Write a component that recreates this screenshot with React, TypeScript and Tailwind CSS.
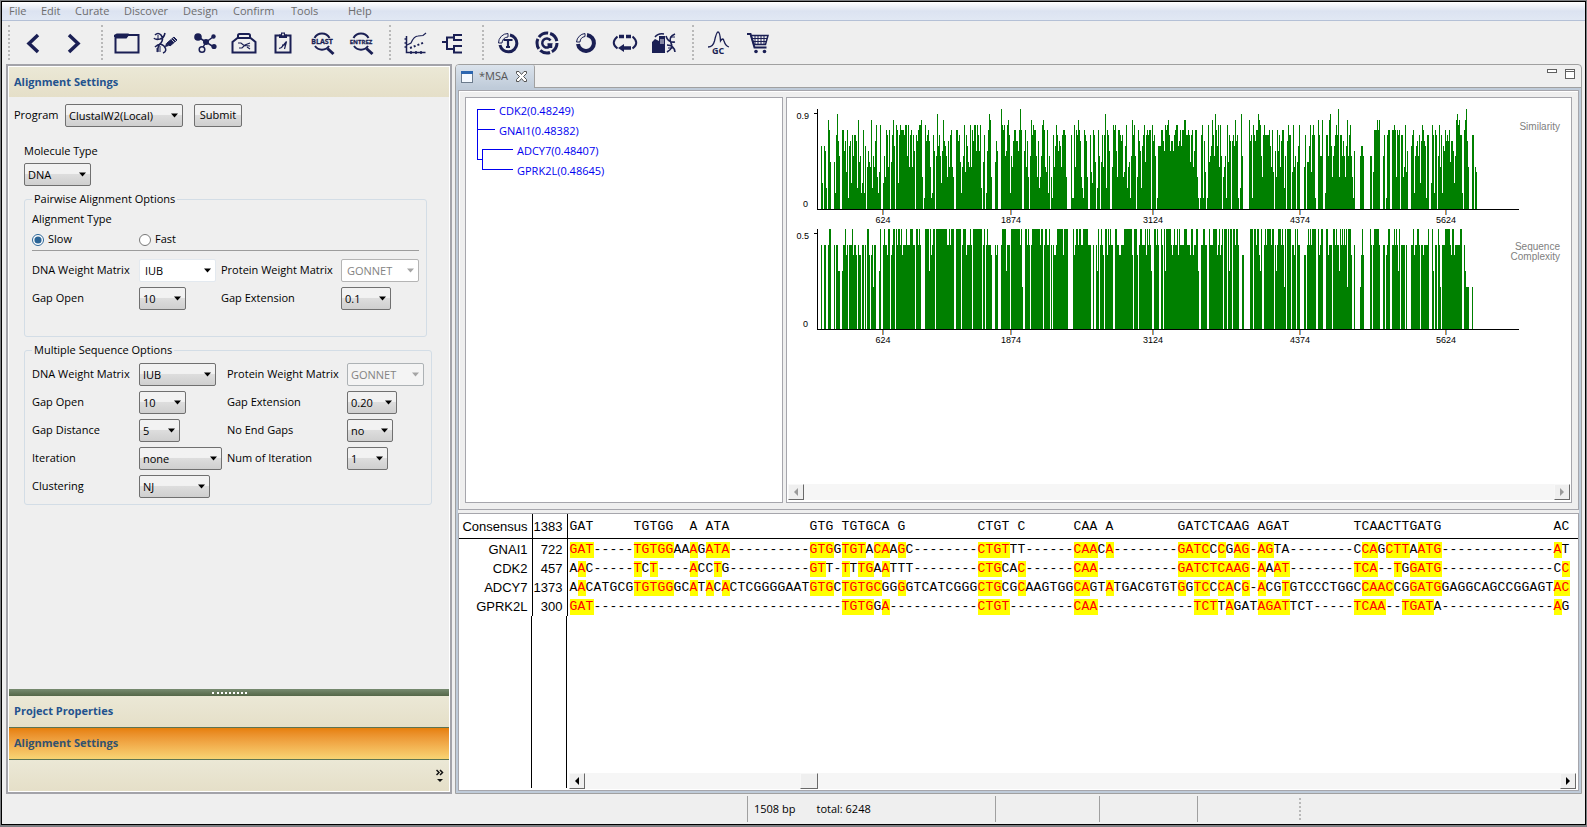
import React from 'react';

interface ComboProps {
  id: string;
  value: string;
  className: string;
  disabled?: boolean;
  flat?: boolean;
}

interface FieldProps extends ComboProps {
  label: string;
}

const MENUS = [
  { label: 'File', width: 'w-8' },
  { label: 'Edit', width: 'w-[34px]' },
  { label: 'Curate', width: 'w-[49px]' },
  { label: 'Discover', width: 'w-[59px]' },
  { label: 'Design', width: 'w-[50px]' },
  { label: 'Confirm', width: 'w-[58px]' },
  { label: 'Tools', width: 'w-[57px]' },
  { label: 'Help', width: 'w-10' },
];

const PAIRWISE_FIELDS: FieldProps[] = [
  { id: 'pw-dna', label: 'DNA Weight Matrix', value: 'IUB', className: 'w-[77px]', flat: true },
  { id: 'pw-protein', label: 'Protein Weight Matrix', value: 'GONNET', className: 'w-[78px]', flat: true, disabled: true },
  { id: 'pw-open', label: 'Gap Open', value: '10', className: 'w-[47px]' },
  { id: 'pw-ext', label: 'Gap Extension', value: '0.1', className: 'w-[50px]' },
];

const MULTIPLE_FIELDS: FieldProps[] = [
  { id: 'ms-dna', label: 'DNA Weight Matrix', value: 'IUB', className: 'w-[77px]' },
  { id: 'ms-protein', label: 'Protein Weight Matrix', value: 'GONNET', className: 'w-[77px]', disabled: true },
  { id: 'ms-open', label: 'Gap Open', value: '10', className: 'w-[47px]' },
  { id: 'ms-ext', label: 'Gap Extension', value: '0.20', className: 'w-[50px]' },
  { id: 'ms-dist', label: 'Gap Distance', value: '5', className: 'w-[41px]' },
  { id: 'ms-end', label: 'No End Gaps', value: 'no', className: 'w-[46px]' },
  { id: 'ms-iter', label: 'Iteration', value: 'none', className: 'w-[83px]' },
  { id: 'ms-num', label: 'Num of Iteration', value: '1', className: 'w-[41px]' },
  { id: 'ms-clust', label: 'Clustering', value: 'NJ', className: 'w-[71px]' },
];

const gap = (n: number) => '-'.repeat(n);
const blank = (n: number) => ' '.repeat(n);

const CONSENSUS =
  'GAT' + blank(5) + 'TGTGG  A ATA' + blank(10) + 'GTG TGTGCA G' + blank(9) + 'CTGT C' + blank(6) +
  'CAA A' + blank(8) + 'GATCTCAAG AGAT' + blank(8) + 'TCAACTTGATG' + blank(14) + 'AC';

const SEQUENCES = [
  {
    name: 'GNAI1',
    start: 722,
    bases:
      'GAT' + gap(5) + 'TGTGGAAAGATA' + gap(10) + 'GTGGTGTACAAGC' + gap(8) + 'CTGTTT' + gap(6) +
      'CAACA' + gap(8) + 'GATCCCGAG-AGTA' + gap(8) + 'CCAGCTTAATG' + gap(14) + 'AT',
  },
  {
    name: 'CDK2',
    start: 457,
    bases:
      'AAC' + gap(5) + 'TCT' + gap(4) + 'ACCTG' + gap(10) + 'GTT-TTTGAATTT' + gap(8) + 'CTGCAC' + gap(6) +
      'CAA' + gap(10) + 'GATCTCAAG-AAAT' + gap(8) + 'TCA--TGGATG' + gap(14) + 'CC',
  },
  {
    name: 'ADCY7',
    start: 1373,
    bases:
      'AACATGCGTGTGGGCATACACTCGGGGAATGTGCTGTGCGGGGTCATCGGGCTGCGCAAGTGGCAGTATGACGTGT' +
      'GGTCCCACG-ACGTGTCCCTGGCCAACCGGATGGAGGCAGCCGGAGTAC',
  },
  {
    name: 'GPRK2L',
    start: 300,
    bases:
      'GAT' + gap(31) + 'TGTGGA' + gap(11) + 'CTGT' + gap(8) + 'CAA' + gap(12) +
      'TCTTAGATAGATTCT' + gap(5) + 'TCAA--TGATA' + gap(14) + 'AG',
  },
];

// One letter per pixel column, a = 1 ... s = 19, '.' = no bar.
const SIMILARITY =
  '...le.lkd.qoi...icnrmj..ookmgoblmenjnnmdqijceocl.hkihqdjhmpfcgp..ejfonho.inql.po' +
  'enpooonppjphnohnk.nmoppqf.bpmnomhbcnk.jrlnjekqmljfmhnohf..oomnichjpgnlihphomppkp' +
  'nkpd.in.ckorqf...imk...spopjkpqncjhmoommkoso..kohmf.jqnpoojfmdfjpqohgocj.fbnhlpn' +
  'kmlhnoonf....nbbphonqomfdbonmf..ngeoni.doj.inhnrdonk..hpopkfoonmnfglpdhibjqnpj.f' +
  'omkdlnpinonoo.pmnj.bllloomkpopqnkmmknopplmolooqqnnoninohkoofb.bnpbmg.bpijlqnjrol' +
  'phpj.fhjbpinm.mnlqmnb.drj......qmnbpnmoorqpjfnpnnnnolhog.kfoknhmoodj.mpnn.gphj.i' +
  'lp....hn.iilpgnpnb..qnjjq..cnnjqrlfjlnpnsfnnjmjflqjnpjfbk.....jllj......jj.goooq' +
  'oq...jn.bnoo..oopofono.nnfhpgk...lnocjlmjnempomlbnn..epncon.jphnclkomnmoimmkejqr' +
  'pqnnc.oqsmh...nn.hg';

const COMPLEXITY =
  '...p..pp..pss...p.ppkk..kppsnp.pppsnppn.pnn.pp.p.ssn.nphpp...ks..psppnss.npss.sp' +
  'sspsnpppspppssspp.sspsp....ssssksnpss.sssssssssssppspsss..sssss.psssnpppsp.sssss' +
  'ssss.ps.pspppn...pnp...psssskppp.ssssssssspsh..sspsp.psssssssspss.psspps.p.pnnps' +
  'sssssnssss.....snpsspssppsssssppp..p..pks.pspn.ssnspspp..ssppnnpppssssssssn.sssn' +
  '.psspppsnspspk..sspsp..sp.skssssspnpsppsnsppppssspppnssnppssk..ppsspp..spppssssn' +
  'psnps.sss.skss.sspssp...nn......sss.sspssnks..pspsssspss.pkpssspsphs.ssss.ppns.s' +
  'pp....nn.pspspssss..snpss...ssnppp.sspsppkspspspshsssn..p.....hnsn......sp.pssss' +
  'sp...pp.npss..ppspspks.pppp.p....ppsnppssp.ppnpppps...sk.pp.sph.pppssssspnssnppp' +
  'ppss..pkhhh...h';

const AXIS_TICKS = [
  { x: 95, label: '624' },
  { x: 223, label: '1874' },
  { x: 365, label: '3124' },
  { x: 512, label: '4374' },
  { x: 658, label: '5624' },
];

const barPath = (levels: string, left: number, base: number) =>
  levels
    .split('')
    .map((ch, i) => (ch === '.' ? '' : `M${left + i} ${base}h1v${-Math.round((ch.charCodeAt(0) - 96) * 5.26)}h-1z`))
    .join('');

const Combo: React.FC<ComboProps> = ({ id, value, className, disabled, flat }) => (
  <span className={`relative inline-block h-[23px] ${className}`}>
    <select
      id={id}
      disabled={disabled}
      defaultValue={value}
      className={`h-full w-full appearance-none rounded-[2px] border leading-5 ${flat ? 'pl-[5px]' : 'pl-[3px]'} ${
        flat
          ? disabled
            ? 'border-[#b4b4b4] bg-white text-[#838383]'
            : 'border-[#e3e9ef] bg-white text-black'
          : disabled
            ? 'border-[#adb2b5] bg-[#f4f4f4] text-[#838383]'
            : 'border-[#707070] bg-linear-to-b from-[#f2f2f2] from-45% via-[#dddddd] via-50% to-[#cfcfcf] text-black'
      }`}
    >
      <option>{value}</option>
    </select>
    <svg className="pointer-events-none absolute top-[9px] right-[5px]" width="7" height="5" viewBox="0 0 7 5">
      <path d="M0 0.5h7L3.5 4.5z" fill={disabled ? '#a5a5a5' : '#000'} />
    </svg>
  </span>
);

const Fields: React.FC<{ fields: FieldProps[] }> = ({ fields }) => (
  <>
    {fields.map(({ label, ...combo }) => (
      <React.Fragment key={combo.id}>
        <label htmlFor={combo.id} className="self-center whitespace-nowrap">{label}</label>
        <Combo {...combo} />
      </React.Fragment>
    ))}
  </>
);

const Dots: React.FC<{ className: string }> = ({ className }) => (
  <div className={`my-1 shrink-0 border-l-2 border-dotted border-[#b9b9b9] ${className}`} />
);

const ToolButton: React.FC<{ name: string; children: React.ReactNode }> = ({ name, children }) => (
  <button type="button" aria-label={name} className="flex w-[39px] items-center justify-center">
    <svg
      width="26"
      height="24"
      viewBox="-13 -12 26 24"
      fill="none"
      stroke="#1a1f54"
      strokeWidth="2"
      className="overflow-visible"
    >
      {children}
    </svg>
  </button>
);

const Magnifier: React.FC<{ text: string; size: number }> = ({ text, size }) => (
  <>
    <path d="M-7.5 -5A8.5 8.5 0 0 1 7.5 -5M-7 3A8.5 8.5 0 0 0 7 3" />
    <path d="M5.5 5.5l6 5.5" strokeWidth="3" />
    <text x="0" y="1" fontSize={size} fontWeight="bold" textAnchor="middle" fill="#1a1f54" stroke="#1a1f54" strokeWidth="0.3">
      {text}
    </text>
  </>
);

const Helix: React.FC = () => (
  <>
    <path d="M-11 -8q3 -3 6 0q3 4 0 8q-4 3 -3 9M-1 -10q-1 5 -5 6q-5 1 -6 -1M-11 4q5 -5 9 -1q4 5 -1 7" strokeWidth="1.600" />
    <path d="M-8 -8v4M-5 -7l3 1M-9 5v4M-6 3v6" strokeWidth="1" />
  </>
);

const Toolbar: React.FC = () => (
  <div className="flex h-[43px] shrink-0 bg-[#efefef]">
    <Dots className="ml-[6px] w-[6px]" />
    <ToolButton name="Back"><path d="M4 -8l-9 8.500l9 8.500" strokeWidth="3.500" /></ToolButton>
    <ToolButton name="Forward"><path d="M-4 -8l9 8.500l-9 8.500" strokeWidth="3.500" /></ToolButton>
    <Dots className="ml-[9px] w-[6px]" />
    <ToolButton name="Open">
      <path d="M-11.500 -6V9.500h23V-8H1l-2 2.500h-10.500" />
      <path d="M-12 -7h11l1 -1.500h-10l-2 1z" fill="#1a1f54" />
    </ToolButton>
    <ToolButton name="Edit sequence">
      <Helix />
      <path d="M1 0L8 -6L11 -3L4 3z" fill="#1a1f54" strokeWidth="1" />
      <path d="M-1 4l1.500 -4l2.500 2.500z" fill="#1a1f54" strokeWidth="0.5" />
      <path d="M5.500 -3.500l3 3M7 -5l3 3" stroke="#efefef" strokeWidth="0.8" />
    </ToolButton>
    <ToolButton name="Interactions">
      <path d="M-7 -6L1 -1L8 -6M8 3.500L1 -1L-3 6" strokeWidth="1.500" />
      <circle cx="-7" cy="-6" r="3.800" fill="#1a1f54" stroke="none" />
      <circle cx="1" cy="-1" r="3" fill="#1a1f54" stroke="none" />
      <circle cx="8.500" cy="-6.500" r="2.200" fill="#1a1f54" stroke="none" />
      <circle cx="9" cy="3.500" r="2.600" fill="#1a1f54" stroke="none" />
      <circle cx="-3" cy="6.500" r="2.800" fill="#efefef" strokeWidth="1.500" />
    </ToolButton>
    <ToolButton name="Toolbox">
      <path d="M-11.500 9.500V-1L-6.500 -5h13l5 4V9.500z" />
      <path d="M-6 -5v-2.500q0 -1.500 1.500 -1.500h9q1.500 0 1.500 1.500V-5" />
      <path d="M-6 0h3l3 2.500l6 0.500M-5 5h3l3 -3l5 -2M3 4l3 2" strokeWidth="1.200" />
    </ToolButton>
    <ToolButton name="Report">
      <path d="M-7.500 -7.500h15v17h-15z" />
      <path d="M-4 -5v-3.500h2v-2h4v2h2V-5z" fill="#1a1f54" stroke="none" />
      <circle cx="0" cy="-8.500" r="1" fill="#efefef" stroke="none" />
      <path d="M-4 5.500l2.500 -1l5 -6l-2 7.500M-1 2h3" strokeWidth="1.200" />
    </ToolButton>
    <ToolButton name="Blast search"><Magnifier text="BLAST" size={7} /></ToolButton>
    <ToolButton name="Entrez search"><Magnifier text="ENTREZ" size={6} /></ToolButton>
    <Dots className="ml-[9px] w-[7px]" />
    <ToolButton name="Plot">
      <path d="M-9.500 -7V9.500H9.500M-11.500 -4h2M-11.500 0h2M-11.500 4h2M-5 8v3M0 8v3M5 8v3" strokeWidth="1.500" />
      <path d="M-9 2l4 -2q3 -7 7 -7l5 -0.500l3 -2.500" strokeWidth="1.200" />
      <path d="M-6 5l14 -5.500" strokeDasharray="2 2" />
    </ToolButton>
    <ToolButton name="Phylogenetic tree">
      <path d="M-13 -1h5M7 -8H-1v5h8M-1 -5.500H-8V6H-1M7 3H-1v6.500h8M-1 -1" />
    </ToolButton>
    <Dots className="ml-[8px] w-[6px]" />
    <ToolButton name="Translate">
      <path d="M2 -8A8.500 8.500 0 1 1 -8 2" strokeWidth="3" />
      <path d="M-9.500 0A9.500 9.500 0 0 1 0 -9.500V-6A6 6 0 0 0 -6 0z" strokeWidth="1" />
      <path d="M-4.500 -3h9M0 -3v7M-2 4h4" strokeWidth="2.200" />
    </ToolButton>
    <ToolButton name="Genome">
      <circle r="10" strokeWidth="3" strokeDasharray="10.500 2" />
      <path d="M3.500 -2.500A4.500 4.500 0 1 0 4 1.500H0.500M4 1v4" strokeWidth="2.500" />
    </ToolButton>
    <ToolButton name="Ring">
      <path d="M1 -8A8 8 0 1 1 -8 1" strokeWidth="4" />
      <path d="M-9.500 -1A9.500 9.500 0 0 1 -1 -9.500V-6.500A6 6 0 0 0 -6 -1z" strokeWidth="1" />
    </ToolButton>
    <ToolButton name="Plasmid">
      <path d="M-7.500 -6.500Q-15 0 -7.500 5.500M7.500 -6.500Q15 0 7.500 5.500" />
      <path d="M-6 -6.500h5M1 -6.500h5M-2 5h8" strokeWidth="3.500" />
      <path d="M-7 5l6 -4v8z" fill="#1a1f54" stroke="none" />
    </ToolButton>
    <ToolButton name="Factory">
      <path d="M-12 10V-1l3 -3l4 2v-5h6V10z" fill="#1a1f54" stroke="none" />
      <path d="M-9 -6q3 -4 9 -3" strokeWidth="1.500" />
      <path d="M-3 -4v5M-1 -4v5" stroke="#efefef" strokeWidth="1" />
      <path d="M2 -7q2 7 9 6M11 -9q-7 3 -4 9q3 5 -4 9M3 2q7 0 8 7" strokeWidth="1.600" />
      <path d="M6 -6h5M4 5h6" strokeWidth="1" />
    </ToolButton>
    <Dots className="ml-[9px] w-[7px]" />
    <ToolButton name="GC content">
      <path d="M-11 4q5 0 6.500 -6q2 -9 3.500 -9q2 0 2.500 9q2.500 -4 3.500 0q1.500 5 5 6" strokeWidth="1.300" />
      <text x="-1" y="11" fontSize="9" fontWeight="bold" textAnchor="middle" fill="#1a1f54" stroke="none">GC</text>
    </ToolButton>
    <ToolButton name="Cart">
      <path d="M-11 -9h3.500l4 13.500h12" />
      <path d="M-7 -7.500H10L7.500 1.500H-4z" strokeWidth="1.500" />
      <path d="M-6 -4.500H9M-5 -1.500H8M-3 -7v8M0 -7v8M3 -7v8M6 -7v8" strokeWidth="1" />
      <circle cx="-2" cy="8.500" r="1.800" fill="#1a1f54" stroke="none" />
      <circle cx="6.500" cy="8.500" r="1.800" fill="#1a1f54" stroke="none" />
    </ToolButton>
  </div>
);

const SettingsPanel: React.FC = () => (
  <aside className="w-[446px] shrink-0 border-2 border-[#a3a3a9]">
    <div className="flex h-full flex-col border border-white bg-[#efefef]">
      <h2 className="h-[30px] bg-linear-to-b from-[#ebe8d6] to-[#e5dfc8] pl-[5px] leading-[30px] font-bold text-[#23528e]">
        Alignment Settings
      </h2>
      <form className="flex-1">
        <div className="mt-[7px] flex items-center pl-[5px]">
          <label htmlFor="program" className="w-[51px]">Program</label>
          <Combo id="program" value="ClustalW2(Local)" className="w-[118px]" />
          <button
            type="button"
            className="ml-[11px] h-[23px] w-12 rounded-[2px] border border-[#707070] bg-linear-to-b from-[#f2f2f2] from-45% via-[#dddddd] via-50% to-[#cfcfcf]"
          >
            Submit
          </button>
        </div>
        <div className="mt-4 pl-[15px]">
          <label htmlFor="molecule" className="block h-5 leading-4">Molecule Type</label>
          <Combo id="molecule" value="DNA" className="w-[67px]" />
        </div>
        <fieldset className="mt-[5px] ml-[15px] h-[146px] w-[403px] rounded-[3px] border border-[#d3dde6] px-[7px]">
          <legend className="px-[2px] leading-4">Pairwise Alignment Options</legend>
          <div className="h-5 leading-6">Alignment Type</div>
          <div className="flex h-6 items-center border-b border-[#9c9c9c] pt-[2px]">
            <label className="flex w-[107px] items-center gap-1">
              <input type="radio" name="mode" defaultChecked className="size-3 accent-[#2a6496]" />
              Slow
            </label>
            <label className="flex items-center gap-1">
              <input type="radio" name="mode" className="size-3" />
              Fast
            </label>
          </div>
          <div className="mt-2 grid grid-cols-[107px_82px_120px_1fr] gap-y-[5px]">
            <Fields fields={PAIRWISE_FIELDS} />
          </div>
        </fieldset>
        <fieldset className="mt-[5px] ml-[15px] h-[163px] w-[408px] rounded-[3px] border border-[#d3dde6] px-[7px]">
          <legend className="px-[2px] leading-4">Multiple Sequence Options</legend>
          <div className="mt-[5px] grid grid-cols-[107px_88px_120px_1fr] gap-y-[5px]">
            <Fields fields={MULTIPLE_FIELDS} />
          </div>
        </fieldset>
      </form>
      <div className="flex h-[7px] items-center justify-center bg-linear-to-b from-[#778b70] to-[#546748]">
        <div className="w-[35px] border-t-2 border-dotted border-white" />
      </div>
      <button type="button" className="h-8 border-b border-[#5d7351] bg-linear-to-b from-[#ebe8d6] to-[#e5dfc8] pl-[5px] text-left font-bold text-[#23528e]">
        Project Properties
      </button>
      <button type="button" className="h-8 border-b border-[#5d7351] bg-linear-to-b from-[#e67f06] to-[#f8d473] pl-[5px] text-left font-bold text-[#33526f]">
        Alignment Settings
      </button>
      <div className="flex h-[31px] items-center justify-end bg-linear-to-b from-[#ebe8d6] to-[#e5dfc8] pr-[5px]">
        <button type="button" aria-label="Configure buttons">
          <svg width="8" height="14" viewBox="0 0 8 14" fill="none" stroke="#111" strokeWidth="1.500">
            <path d="M0.500 1l2.500 2.500l-2.500 2.500M4 1l2.500 2.500l-2.500 2.500" />
            <path d="M1 10h6l-3 3z" fill="#111" stroke="none" />
          </svg>
        </button>
      </div>
    </div>
  </aside>
);

const TreePanel: React.FC = () => (
  <section className="w-[318px] shrink-0 border border-[#a6a6ac] bg-white">
    <svg width="200" height="90" fontSize="11">
      <path
        d="M29 11.500H11.500V61.500H16.500M11.500 31.500H29M47 51.500H16.500V71.500H47"
        fill="none"
        stroke="#0000f0"
        shapeRendering="crispEdges"
      />
      <g fill="#0000f0">
        <text x="33" y="17">CDK2(0.48249)</text>
        <text x="33" y="37">GNAI1(0.48382)</text>
        <text x="51" y="57">ADCY7(0.48407)</text>
        <text x="51" y="77">GPRK2L(0.48645)</text>
      </g>
    </svg>
  </section>
);

const Plot: React.FC<{ levels: string; max: string; top: number }> = ({ levels, max, top }) => (
  <g transform={`translate(0 ${top})`} fontSize="9">
    <path d={barPath(levels, 31, 100)} fill="#008000" shapeRendering="crispEdges" />
    <path d="M30.500 0V100.500H732M27 4.500H30" stroke="#000" fill="none" shapeRendering="crispEdges" />
    <text x="22" y="10" textAnchor="end">{max}</text>
    <text x="21" y="98" textAnchor="end">0</text>
    {AXIS_TICKS.map(tick => (
      <g key={tick.label}>
        <path d={`M${tick.x}.5 101v5`} stroke="#d08a3c" shapeRendering="crispEdges" />
        <path d={`M${tick.x + 1}.5 101v5`} stroke="#6fa8dc" shapeRendering="crispEdges" />
        <text x={tick.x + 1} y="114" textAnchor="middle">{tick.label}</text>
      </g>
    ))}
  </g>
);

const ScrollBar: React.FC<{ disabled?: boolean; thumb?: boolean }> = ({ disabled, thumb }) => {
  const box = 'flex h-4 w-4 items-center justify-center border border-t-[#f8f8f8] border-r-[#696969] border-b-[#696969] border-l-[#f8f8f8] bg-[#efefef]';
  const color = disabled ? '#9a9a9a' : '#000';
  return (
    <div className="flex h-4 bg-[#f6f6f6]">
      <button type="button" aria-label="Scroll left" disabled={disabled} className={box}>
        <svg width="4" height="8"><path d="M4 0v8L0 4z" fill={color} /></svg>
      </button>
      <div className="flex flex-1">
        <div className="w-[22%]" />
        {thumb && <div className="h-4 w-[18px] border border-t-[#f8f8f8] border-r-[#696969] border-b-[#696969] border-l-[#f8f8f8] bg-[#efefef]" />}
      </div>
      <button type="button" aria-label="Scroll right" disabled={disabled} className={box}>
        <svg width="4" height="8"><path d="M0 0v8l4 -4z" fill={color} /></svg>
      </button>
    </div>
  );
};

const ChartPanel: React.FC = () => (
  <section className="flex min-w-0 flex-1 flex-col border border-[#a6a6ac] bg-white px-px pb-[2px]">
    <div className="flex flex-1 justify-between font-['Liberation_Sans',Arial,sans-serif]">
      <svg width="735" height="260" className="-ml-px shrink-0">
        <Plot levels={SIMILARITY} max="0.9" top={11} />
        <Plot levels={COMPLEXITY} max="0.5" top={131} />
      </svg>
      <div className="-ml-6 shrink-0 pt-6 pr-[10px] text-right text-[10px] leading-[10px] text-[#808080]">
        <div className="h-[120px]">Similarity</div>
        <div>Sequence<br />Complexity</div>
      </div>
    </div>
    <ScrollBar disabled />
  </section>
);

const Bases: React.FC<{ bases: string; mark?: boolean }> = ({ bases, mark }) => (
  <div className="flex font-['Liberation_Mono','Courier_New',monospace] text-[13px] leading-4">
    {bases.split('').map((base, i) => (
      <span
        key={i}
        className={`flex h-4 w-2 justify-center whitespace-pre ${mark && base === CONSENSUS[i] ? 'bg-[#ffff00] text-[#ff0000]' : ''}`}
      >
        {base}
      </span>
    ))}
  </div>
);

const AlignmentView: React.FC = () => (
  <section className="flex min-h-0 flex-1 flex-col border border-[#a6a6ac] bg-white font-['Liberation_Sans',Arial,sans-serif] text-[13px] leading-4">
    <table className="w-full table-fixed border-collapse">
      <thead>
        <tr className="h-6 border-b border-black">
          <th scope="col" className="w-[73px] border-r border-black pt-[2px] pr-1 text-right font-normal">Consensus</th>
          <th scope="col" className="w-[35px] border-r border-black pt-[2px] pr-1 text-right font-normal">1383</th>
          <th scope="col" className="pt-[2px] pl-[2px] font-normal"><Bases bases={CONSENSUS} /></th>
        </tr>
      </thead>
      <tbody>
        {SEQUENCES.map(seq => (
          <tr key={seq.name} className="h-[19px] first:h-[21px] first:[&>*]:pt-[2px]">
            <th scope="row" className="border-r border-black pr-1 text-right font-normal">{seq.name}</th>
            <td className="border-r border-black pr-1 text-right">{seq.start}</td>
            <td className="pl-[2px]"><Bases bases={seq.bases} mark /></td>
          </tr>
        ))}
      </tbody>
    </table>
    <div className="flex flex-1">
      <div className="mb-[2px] w-[73px] border-r border-black" />
      <div className="mb-[2px] w-[35px] border-r border-black" />
      <div className="flex flex-1 flex-col justify-end pr-[2px] pb-px pl-[2px]">
        <ScrollBar thumb />
      </div>
    </div>
  </section>
);

const Editor: React.FC = () => (
  <main className="flex min-w-0 flex-1 flex-col overflow-hidden rounded-t-[4px] border border-[#a0a0a0] bg-[#efefef]">
    <div className="flex h-[23px] shrink-0">
      <div className="flex w-[79px] items-center rounded-tr-[2px] border-r border-[#a0a0a0] bg-linear-to-b from-[#dbe3ec] to-[#bfcbd9] pl-[5px] text-[#555]">
        <svg width="12" height="12" className="mr-[6px]" shapeRendering="crispEdges">
          <path d="M0.500 0.500h11v11h-11z" fill="#f4f9ff" stroke="#6c7b8c" />
          <path d="M0 0h12v3H0z" fill="#2c66b0" />
        </svg>
        *MSA
        <button type="button" aria-label="Close" className="ml-2">
          <svg width="11" height="11" viewBox="0 0 11 11" fill="#fff" stroke="#555">
            <path d="M0.500 0.500h2.500l2.500 3l2.500 -3h2.500v2l-3 3l3 3v2h-2.500l-2.500 -3l-2.500 3h-2.500v-2l3 -3l-3 -3z" />
          </svg>
        </button>
      </div>
      <div className="flex flex-1 items-start justify-end gap-2 border-b border-[#a0a0a0] pt-1 pr-[6px]">
        <button type="button" aria-label="Minimize" className="h-1 w-[10px] border border-[#606060] bg-white" />
        <button type="button" aria-label="Maximize" className="h-[10px] w-[10px] border border-t-[3px] border-double border-[#606060] bg-white" />
      </div>
    </div>
    <div className="flex min-h-0 flex-1 flex-col bg-[#bfcbd9] p-[2px]">
      <div className="flex h-[420px] shrink-0 border border-[#a6a6ac] bg-white pt-px pl-px">
        <div className="flex min-w-0 flex-1 gap-[3px] bg-[#efefef] pt-[5px] pr-[6px] pb-[6px] pl-[5px]">
          <TreePanel />
          <ChartPanel />
        </div>
      </div>
      <div className="h-[3px] shrink-0 bg-[#efefef]" />
      <AlignmentView />
    </div>
  </main>
);

const App: React.FC = () => (
  <div className="h-screen bg-[#7d7f82] px-px pt-px pb-[2px] font-['Open_Sans','Noto_Sans',sans-serif] text-[11px] text-black">
    <div className="flex h-full flex-col border border-black bg-[#efefef]">
      <nav className="flex h-[19px] shrink-0 border-b border-[#b4c0d6] bg-linear-to-b from-white via-[#dce3f1] via-50% to-[#e1e8f4] pl-[7px] text-[#6d6d6d]">
        {MENUS.map(menu => (
          <button key={menu.label} type="button" className={`text-left ${menu.width}`}>{menu.label}</button>
        ))}
      </nav>
      <Toolbar />
      <div className="flex min-h-0 flex-1 gap-[3px] pr-[3px] pl-1">
        <SettingsPanel />
        <Editor />
      </div>
      <footer className="flex h-[30px] shrink-0 items-center pl-[745px]">
        <div className="flex h-[26px] w-[248px] items-center gap-[21px] border-l border-[#a0a0a0] pl-[6px]">
          <span>1508 bp</span>
          <span>total: 6248</span>
        </div>
        <div className="h-[26px] w-[104px] border-l border-[#a0a0a0]" />
        <div className="h-[26px] w-[98px] border-l border-[#a0a0a0]" />
        <div className="h-[26px] w-[102px] border-l border-[#a0a0a0]" />
        <div className="h-[22px] border-l-2 border-dotted border-[#b9b9b9]" />
      </footer>
    </div>
  </div>
);

export default App;
